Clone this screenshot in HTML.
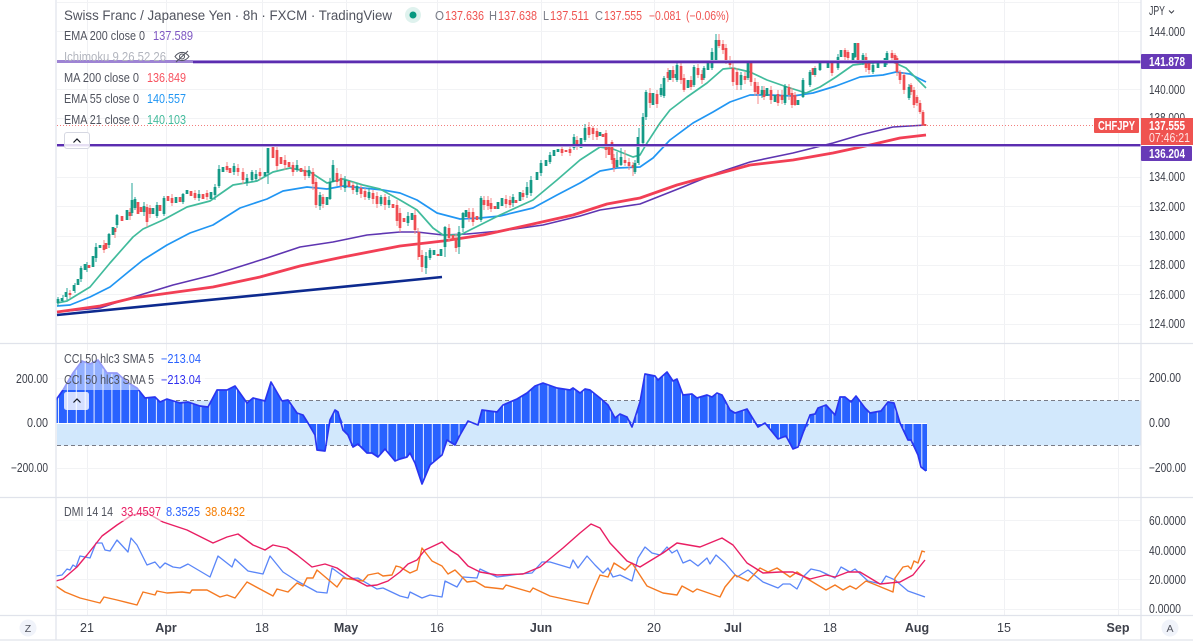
<!DOCTYPE html>
<html><head><meta charset="utf-8"><title>CHFJPY</title>
<style>
html,body{margin:0;padding:0;background:#fff;width:1193px;height:641px;overflow:hidden}
svg{display:block;font-family:"Liberation Sans",sans-serif}
text{font-size:12.5px}
.l{fill:#50535e}
.a{fill:#3d404a}
.t{fill:#3d404a;text-anchor:middle}
.w{font-weight:600}
</style></head><body>
<svg width="1193" height="641" viewBox="0 0 1193 641" xmlns="http://www.w3.org/2000/svg">
<defs>
<pattern id="bars" x="59" y="0" width="8.9" height="10" patternUnits="userSpaceOnUse">
<rect width="8.9" height="10" fill="#2962ff"/><rect x="7.9" width="1" height="10" fill="#e6ecff"/>
</pattern>
</defs>
<!-- grid -->
<path stroke="#f0f1f4" stroke-width="1" fill="none" d="M87.5 0V615M166.5 0V615M262.5 0V615M346.5 0V615M437.5 0V615M541.5 0V615M654.5 0V615M733.5 0V615M829.5 0V615M917.5 0V615M1004.5 0V615M1118.5 0V615"/>
<path stroke="#f2f3f5" stroke-width="1" fill="none" d="M57 2.5H1141M57 31.5H1141M57 89.5H1141M57 118.5H1141M57 177.5H1141M57 206.5H1141M57 236.5H1141M57 265.5H1141M57 294.5H1141M57 324.5H1141M57 378.5H1141M57 468.5H1141M57 520.5H1141M57 550.5H1141M57 579.5H1141M57 609.5H1141"/>
<!-- CCI band -->
<rect x="57" y="400.5" width="1084" height="45" fill="#d2e8fc"/>
<path d="M57 400.5H1141M57 445.5H1141" stroke="#787b86" stroke-width="1" stroke-dasharray="4 3" fill="none"/>
<polygon fill="url(#bars)" stroke="none" points="56,423 56,400 63,390 73,373 82,361 90,364 98,360 107,373 117,373 127,382 137,388 145,398 155,397 160,402 167,399 180,403 188,402 200,406 208,407 217,390 227,390 235,386 247,403 253,398 265,401 271,382 282,401 288,400 297,413 303,415 308,423 315,435 317,450 325,451 330,423 330,420 335,410 338,412 343,423 343,430 348,435 353,447 358,444 367,453 372,453 378,457 385,449 395,461 400,459 407,457 410,453 415,463 422,484 430,465 442,455 447,440 455,445 460,435 468,423 478,425 482,410 497,412 503,405 517,399 527,393 535,386 543,383 557,388 570,390 573,388 580,393 585,389 590,390 600,398 608,405 615,418 620,414 627,417 632,423 632,427 640,402 645,374 655,376 658,380 667,372 673,381 677,379 683,395 692,394 697,398 707,395 712,397 717,393 722,395 730,410 735,413 747,409 756,423 758,427 765,423 778,439 786,436 793,449 798,447 803,433 810,423 810,415 815,414 818,408 826,405 835,415 840,397 845,397 851,402 856,396 865,408 870,413 881,411 888,402 894,403 900,423 908,440 911,440 918,455 921,467 926,471 927,471 927,423"/>
<path d="M56 423.5H927" stroke="#fff" stroke-width="1" fill="none"/>
<polyline fill="none" stroke="#2a35f0" stroke-width="1.7" stroke-linejoin="round" points="56,400 63,390 73,373 82,361 90,364 98,360 107,373 117,373 127,382 137,388 145,398 155,397 160,402 167,399 180,403 188,402 200,406 208,407 217,390 227,390 235,386 247,403 253,398 265,401 271,382 282,401 288,400 297,413 303,415 308,423 315,435 317,450 325,451 330,420 335,410 338,412 343,430 348,435 353,447 358,444 367,453 372,453 378,457 385,449 395,461 400,459 407,457 410,453 415,463 422,484 430,465 442,455 447,440 455,445 460,435 468,421 478,425 482,410 497,412 503,405 517,399 527,393 535,386 543,383 557,388 570,390 573,388 580,393 585,389 590,390 600,398 608,405 615,418 620,414 627,417 632,427 640,402 645,374 655,376 658,380 667,372 673,381 677,379 683,395 692,394 697,398 707,395 712,397 717,393 722,395 730,410 735,413 747,409 758,427 765,423 778,439 786,436 793,449 798,447 803,433 810,415 815,414 818,408 826,405 835,415 840,397 845,397 851,402 856,396 865,408 870,413 881,411 888,402 894,403 900,423 908,440 911,440 918,455 921,467 926,471"/>
<rect x="57" y="350" width="148" height="40" fill="#fff" opacity=".5"/>
<!-- moving averages under candles -->
<polyline fill="none" stroke="#5e35b1" stroke-width="1.6" stroke-linejoin="round" points="57,312 100,308 127,299 173,285 213,275 267,258 300,247 333,242 367,235 400,232 417,232 443,235 467,234 500,231 543,225 580,216 600,210 640,204 683,187 717,173 750,162 793,153 833,143 860,135 893,127 926,125"/>
<polyline fill="none" stroke="#f23f55" stroke-width="2.8" stroke-linejoin="round" points="57,312 100,306 133,298 213,287 260,277 300,266 343,257 400,246 443,241 483,235 533,224 573,215 607,204 640,198 677,185 717,174 750,165 793,160 833,153 870,145 900,138 926,135"/>
<polyline fill="none" stroke="#2196f3" stroke-width="1.7" stroke-linejoin="round" points="57,306 70,305 90,297 110,287 127,273 143,260 167,245 190,233 213,225 240,208 267,199 283,191 307,187 327,189 343,186 363,188 383,190 400,193 417,200 437,213 460,219 480,218 500,216 533,208 557,195 580,183 600,171 617,168 640,167 653,158 670,140 693,123 713,112 730,102 750,95 770,95 793,96 813,93 836,86 860,77 883,75 896,72 910,74 926,82"/>
<polyline fill="none" stroke="#41bb9c" stroke-width="1.7" stroke-linejoin="round" points="57,303 67,301 90,287 110,263 133,237 143,229 163,220 187,207 210,201 233,185 257,181 273,172 290,168 310,172 327,183 343,179 363,185 380,189 400,200 417,210 433,228 443,235 460,235 480,225 500,215 533,200 557,180 580,160 600,147 613,149 633,157 640,155 647,143 660,123 670,110 687,97 707,83 723,69 733,68 750,72 767,80 787,87 806,93 820,87 836,77 853,65 870,63 893,62 906,68 926,88"/>
<path d="M57 315L442 277" stroke="#0d2a8f" stroke-width="2.6" fill="none"/>
<!-- candle wicks -->
<path stroke="#f48a88" stroke-width="1" fill="none" d="M70 290V298M104 240V253M115 228V238M130 208V220M147 204V227M150 205V218M172 194V206M195 190V200M207 190V200M227 162V172M238 164V176M243 168V184M260 168V180M277 147V170M285 155V170M293 162V176M305 166V180M313 168V190M316 178V208M323 194V208M337 168V186M341 174V190M353 182V194M361 185V198M365 188V200M373 190V204M377 192V208M385 194V210M397 200V226M400 208V232M415 210V234M418 228V260M422 250V272M449 224V242M456 234V252M469 208V222M473 208V226M484 196V210M488 196V210M491 198V212M506 195V208M510 196V208M523 190V200M562 146V156M570 146V156M577 136V150M589 122V138M593 126V140M597 128V140M606 130V158M612 140V164M614 154V172M625 150V166M629 158V170M633 162V176M650 88V108M657 90V108M668 68V82M673 66V82M681 62V84M684 74V92M691 76V90M698 64V78M702 70V84M719 34V48M723 40V54M726 44V64M730 56V68M733 62V86M737 68V90M745 72V84M751 60V86M755 78V96M758 82V104M764 86V100M771 86V104M778 90V106M782 90V104M789 84V100M792 88V108M795 92V106M815 66V77M832 60V76M845 48V60M848 50V60M858 43V64M866 53V72M869 60V74M892 50V60M895 53V64M897 56V76M900 70V84M904 72V94M911 83V95M914 87V108M917 95V106M920 100V114M923 110V126"/>
<path stroke="#26a69a" stroke-width="1" fill="none" d="M58 297V306M63 295V302M67 288V300M75 283V293M81 266V282M87 262V272M96 243V262M109 233V248M117 214V228M132 183V216M135 197V210M144 202V216M157 202V218M164 196V216M183 193V204M199 190V201M215 184V200M219 165V188M234 163V175M247 174V186M252 170V182M256 170V181M268 148V184M297 160V172M309 166V178M320 192V210M330 178V200M333 160V182M345 176V192M357 184V195M369 188V200M381 195V206M389 196V208M408 212V226M426 252V274M430 248V260M445 226V257M459 226V254M463 212V232M481 196V222M513 194V207M527 182V198M531 176V196M541 160V176M550 152V164M574 134V150M585 124V142M617 152V168M621 148V166M635 160V174M639 128V165M643 113V145M646 90V120M661 84V97M664 76V98M677 62V82M694 65V87M704 66V80M712 48V70M716 34V62M741 72V90M748 60V80M762 86V98M785 84V105M803 78V98M810 70V87M820 60V71M838 54V70M855 43V58M863 53V65M873 63V74M887 51V65M909 84V100"/>
<!-- candle bodies -->
<path stroke="#ef4d52" stroke-width="2.7" fill="none" d="M70 293V295M89 265V268M104 245V250M106 243V249M115 228V232M122 216V221M130 212V216M138 202V214M141 207V212M147 207V222M150 208V214M160 205V211M168 196V201M172 198V203M180 197V202M191 191V196M195 193V198M203 194V199M207 193V197M227 166V170M230 168V173M238 168V172M243 172V180M260 172V176M273 147V158M277 150V166M281 157V164M285 160V165M289 162V167M293 165V172M301 168V172M305 170V176M313 172V184M316 182V205M323 197V204M337 173V182M341 178V186M349 181V187M353 185V190M361 188V194M365 191V197M373 193V199M377 196V204M385 197V205M393 204V208M397 205V221M400 213V228M404 218V222M415 215V230M419 232V257M422 255V267M438 254V256M449 228V238M453 235V240M456 238V248M469 212V218M473 212V222M477 216V220M484 200V205M488 200V206M491 203V209M495 206V209M506 199V204M510 200V205M516 200V203M523 193V197M562 149V153M566 150V152M570 149V153M577 140V147M589 127V135M593 128V134M597 131V137M603 134V137M606 133V150M609 145V155M612 142V160M614 158V168M625 160V163M629 162V166M633 165V168M650 93V103M657 94V104M668 72V78M673 70V78M681 66V80M684 78V90M691 80V87M698 68V75M702 74V80M719 40V46M723 44V50M726 48V60M730 60V65M733 68V82M737 72V85M745 76V80M751 62V82M755 82V92M758 86V94M764 90V97M771 90V100M778 94V103M782 95V100M789 87V95M792 93V105M795 95V105M813 68V75M832 63V73M845 50V57M848 52V58M858 43V62M866 57V68M869 63V70M892 53V58M895 55V62M897 58V72M900 72V80M904 75V90M911 85V92M914 90V105M917 97V103M920 103V112M923 112V125M925 124V126"/>
<path stroke="#159a87" stroke-width="2.7" fill="none" d="M58 303V299M62 301V298M66 297V292M74 291V285M78 285V279M81 279V268M85 270V264M93 267V256M96 258V247M100 248V245M109 245V234M113 235V227M117 225V215M127 220V210M132 213V200M135 208V199M144 212V206M153 214V208M157 216V205M164 214V198M176 203V197M183 202V194M187 194V190M199 198V194M211 199V192M215 195V187M219 186V169M223 172V167M234 172V166M247 183V178M252 180V172M256 179V174M265 176V172M268 173V148M297 170V165M309 176V170M320 206V195M327 205V197M330 199V182M333 182V165M345 188V180M357 192V186M369 198V192M381 204V197M389 205V200M408 223V216M412 220V213M426 268V256M430 258V250M434 255V250M441 256V249M445 247V227M459 247V232M463 228V213M466 217V210M481 220V198M498 209V202M502 206V198M513 203V197M520 201V192M527 195V187M531 193V180M537 180V172M541 173V163M546 166V160M550 162V155M554 156V150M558 152V149M574 148V137M581 148V138M585 140V128M600 136V132M617 167V160M621 165V157M635 172V163M638 163V137M643 143V117M646 117V92M653 105V93M661 95V88M664 96V78M670 80V70M676 78V74M677 80V65M688 88V80M694 85V67M704 78V68M708 70V60M712 68V52M716 60V40M741 85V75M748 78V63M762 95V90M767 96V88M775 102V95M785 103V86M798 105V100M803 97V80M810 85V72M815 75V68M820 70V62M828 68V60M838 68V57M841 57V50M853 60V53M855 57V43M863 63V55M873 72V65M878 68V63M885 67V58M887 63V53M909 98V87"/>
<!-- horizontal rays and price line -->
<path d="M57 125.5H1094" stroke="#ef5350" stroke-width="1" stroke-dasharray="1 2" fill="none" opacity=".75"/>
<rect x="57" y="60" width="136" height="3" fill="#9e84d4"/>
<rect x="193" y="61" width="948" height="2.3" fill="#5b2db0"/>
<rect x="193" y="60" width="948" height="1" fill="#a68dd8"/>
<rect x="57" y="144" width="1084" height="2.2" fill="#5b2db0"/>
<rect x="57" y="146" width="1084" height="1" fill="#b7a4e0"/>
<!-- DMI -->
<polyline fill="none" stroke="#5a86f8" stroke-width="1.3" stroke-linejoin="round" points="56,576 62,575 67,569 70,570 73,565 76,567 80,556 90,558 96,543 102,543 105,550 110,551 117,540 128,552 131,538 137,545 147,565 155,562 160,568 165,563 173,567 180,568 188,564 210,577 218,556 232,567 235,559 248,571 263,574 270,556 283,572 297,581 317,592 327,593 332,568 347,579 358,578 377,589 383,588 400,596 408,598 410,592 422,598 430,595 442,597 445,581 457,587 463,577 477,578 480,569 497,577 520,574 532,573 542,562 550,562 570,568 573,560 578,568 587,556 595,565 603,573 608,568 613,577 620,575 632,581 638,558 645,547 652,553 660,555 667,547 672,553 677,550 683,563 690,560 698,566 707,558 710,564 716,555 725,563 737,577 748,570 763,582 778,588 783,584 790,584 797,589 803,577 811,569 820,571 835,578 841,567 850,572 855,569 868,581 881,584 886,576 895,580 908,591 925,597"/>
<polyline fill="none" stroke="#f57a22" stroke-width="1.4" stroke-linejoin="round" points="56,586 65,592 80,598 100,603 104,597 117,600 137,605 143,592 155,595 157,591 167,593 182,592 190,593 192,590 207,590 220,597 227,595 235,598 247,582 273,596 277,589 288,592 297,583 303,586 307,578 313,578 317,570 337,587 343,578 363,581 368,575 378,573 383,576 392,575 396,566 400,567 410,573 417,570 422,548 432,561 442,566 448,574 455,570 467,582 475,581 485,587 503,589 506,585 530,592 533,588 550,596 573,601 588,604 593,591 600,575 608,577 614,563 625,570 632,563 647,586 663,593 677,595 682,586 693,592 697,589 720,597 725,587 735,575 748,581 760,568 768,572 777,568 790,577 797,572 806,578 826,590 835,585 843,590 850,586 856,589 866,581 876,585 893,592 895,578 903,567 908,566 911,569 914,561 918,563 922,551 925,552"/>
<polyline fill="none" stroke="#e91e63" stroke-width="1.4" stroke-linejoin="round" points="56,581 63,579 77,567 87,555 102,536 117,525 132,515 147,513 163,522 187,530 213,543 227,537 238,534 253,545 265,550 273,545 287,548 297,555 312,567 325,564 337,568 350,577 367,586 377,585 388,581 400,572 408,564 417,560 425,550 442,542 450,550 458,555 468,566 480,572 497,575 523,574 540,567 563,548 580,533 591,524 600,528 610,543 627,561 640,567 663,553 677,543 700,547 722,538 733,545 747,563 763,573 780,572 793,572 810,579 826,575 835,577 848,572 860,572 880,584 900,582 913,575 925,560"/>
<rect x="57" y="505" width="190" height="16" fill="#fff" opacity=".55"/>
<!-- pane separators and axis -->
<path stroke="#e0e3eb" stroke-width="1.2" fill="none" d="M56 0V640M1141 0V640M0 343.5H1193M0 497.5H1193M0 615.5H1193M0 640H1193"/>
<!-- legend top -->
<text x="64" y="20" fill="#50535e" style="font-size:13.5px" textLength="328" lengthAdjust="spacingAndGlyphs">Swiss Franc / Japanese Yen · 8h · FXCM · TradingView</text>
<circle cx="413" cy="15" r="8" fill="#dff2ee"/><circle cx="413" cy="15" r="3.5" fill="#089981"/>
<text x="435" y="20" fill="#787b86" textLength="9" lengthAdjust="spacingAndGlyphs">O</text><text x="445" y="20" fill="#ef5350" textLength="39" lengthAdjust="spacingAndGlyphs">137.636</text>
<text x="489" y="20" fill="#787b86" textLength="8" lengthAdjust="spacingAndGlyphs">H</text><text x="498" y="20" fill="#ef5350" textLength="39" lengthAdjust="spacingAndGlyphs">137.638</text>
<text x="543" y="20" fill="#787b86" textLength="6" lengthAdjust="spacingAndGlyphs">L</text><text x="550" y="20" fill="#ef5350" textLength="39" lengthAdjust="spacingAndGlyphs">137.511</text>
<text x="595" y="20" fill="#787b86" textLength="8" lengthAdjust="spacingAndGlyphs">C</text><text x="604" y="20" fill="#ef5350" textLength="38" lengthAdjust="spacingAndGlyphs">137.555</text>
<text x="649" y="20" fill="#ef5350" textLength="32" lengthAdjust="spacingAndGlyphs">−0.081</text>
<text x="686" y="20" fill="#ef5350" textLength="43" lengthAdjust="spacingAndGlyphs">(−0.06%)</text>
<text x="64" y="40" class="l" textLength="81" lengthAdjust="spacingAndGlyphs">EMA 200 close 0</text><text x="153" y="40" fill="#7e57c2" textLength="40" lengthAdjust="spacingAndGlyphs">137.589</text>
<text x="64" y="61" fill="#b2b5be" textLength="102" lengthAdjust="spacingAndGlyphs">Ichimoku 9 26 52 26</text>
<g fill="none" stroke="#50535e" stroke-width="1"><path d="M175 56.5c4-5.5 10-5.5 14 0c-4 5.5-10 5.5-14 0z"/><circle cx="182" cy="56.5" r="2.5"/><path d="M176 62L188 51"/></g>
<text x="64" y="82" class="l" textLength="75" lengthAdjust="spacingAndGlyphs">MA 200 close 0</text><text x="147" y="82" fill="#f7525f" textLength="39" lengthAdjust="spacingAndGlyphs">136.849</text>
<text x="64" y="103" class="l" textLength="75" lengthAdjust="spacingAndGlyphs">EMA 55 close 0</text><text x="147" y="103" fill="#2196f3" textLength="39" lengthAdjust="spacingAndGlyphs">140.557</text>
<text x="64" y="124" class="l" textLength="75" lengthAdjust="spacingAndGlyphs">EMA 21 close 0</text><text x="147" y="124" fill="#43bb9c" textLength="39" lengthAdjust="spacingAndGlyphs">140.103</text>
<rect x="64.5" y="132.5" width="25" height="16" rx="2.5" fill="#fff" fill-opacity=".85" stroke="#d6d8e2"/>
<path d="M73.5 142.5L77 139L80.5 142.5" fill="none" stroke="#131722" stroke-width="1.2"/>
<!-- CCI legend -->
<text x="64" y="363" class="l" textLength="90" lengthAdjust="spacingAndGlyphs">CCI 50 hlc3 SMA 5</text><text x="161" y="363" fill="#2962ff" textLength="40" lengthAdjust="spacingAndGlyphs">−213.04</text>
<text x="64" y="384" class="l" textLength="90" lengthAdjust="spacingAndGlyphs">CCI 50 hlc3 SMA 5</text><text x="161" y="384" fill="#3030f0" textLength="40" lengthAdjust="spacingAndGlyphs">−213.04</text>
<rect x="64" y="392" width="25" height="18" rx="2.5" fill="#fff" fill-opacity=".8"/>
<path d="M73.5 402.5L77 399L80.5 402.5" fill="none" stroke="#131722" stroke-width="1.2"/>
<!-- DMI legend -->
<text x="64" y="516" class="l" textLength="49" lengthAdjust="spacingAndGlyphs">DMI 14 14</text>
<text x="121" y="516" fill="#e91e63" textLength="40" lengthAdjust="spacingAndGlyphs">33.4597</text>
<text x="166" y="516" fill="#2962ff" textLength="34" lengthAdjust="spacingAndGlyphs">8.3525</text>
<text x="205" y="516" fill="#f57c00" textLength="40" lengthAdjust="spacingAndGlyphs">38.8432</text>
<!-- left axis labels -->
<text x="16" y="383" class="a" textLength="32" lengthAdjust="spacingAndGlyphs">200.00</text>
<text x="27" y="427" class="a" textLength="21" lengthAdjust="spacingAndGlyphs">0.00</text>
<text x="11" y="472" class="a" textLength="37" lengthAdjust="spacingAndGlyphs">−200.00</text>
<!-- right axis labels -->
<text x="1149" y="15" class="a" textLength="16" lengthAdjust="spacingAndGlyphs">JPY</text>
<path d="M1169 10.5L1171.5 13L1174 10.5" fill="none" stroke="#3d404a"/>
<g class="a">
<text x="1149" y="36" textLength="36" lengthAdjust="spacingAndGlyphs">144.000</text>
<text x="1149" y="94" textLength="36" lengthAdjust="spacingAndGlyphs">140.000</text>
<text x="1149" y="122" textLength="36" lengthAdjust="spacingAndGlyphs">138.000</text>
<text x="1149" y="181" textLength="36" lengthAdjust="spacingAndGlyphs">134.000</text>
<text x="1149" y="211" textLength="36" lengthAdjust="spacingAndGlyphs">132.000</text>
<text x="1149" y="240" textLength="36" lengthAdjust="spacingAndGlyphs">130.000</text>
<text x="1149" y="269" textLength="36" lengthAdjust="spacingAndGlyphs">128.000</text>
<text x="1149" y="299" textLength="36" lengthAdjust="spacingAndGlyphs">126.000</text>
<text x="1149" y="328" textLength="36" lengthAdjust="spacingAndGlyphs">124.000</text>
<text x="1149" y="382" textLength="32" lengthAdjust="spacingAndGlyphs">200.00</text>
<text x="1149" y="427" textLength="21" lengthAdjust="spacingAndGlyphs">0.00</text>
<text x="1149" y="472" textLength="37" lengthAdjust="spacingAndGlyphs">−200.00</text>
<text x="1149" y="525" textLength="37" lengthAdjust="spacingAndGlyphs">60.0000</text>
<text x="1149" y="555" textLength="37" lengthAdjust="spacingAndGlyphs">40.0000</text>
<text x="1149" y="584" textLength="37" lengthAdjust="spacingAndGlyphs">20.0000</text>
<text x="1149" y="613" textLength="32" lengthAdjust="spacingAndGlyphs">0.0000</text>
</g>
<!-- price tags -->
<rect x="1141" y="54" width="51" height="15" rx="1" fill="#673ab7"/>
<text x="1149" y="66" fill="#fff" class="w" textLength="36" lengthAdjust="spacingAndGlyphs">141.878</text>
<rect x="1141" y="146" width="51" height="15" rx="1" fill="#673ab7"/>
<text x="1149" y="158" fill="#fff" class="w" textLength="36" lengthAdjust="spacingAndGlyphs">136.204</text>
<rect x="1094" y="118" width="45" height="15" rx="1" fill="#ef5350"/>
<text x="1098" y="130" fill="#fff" class="w" textLength="37" lengthAdjust="spacingAndGlyphs">CHFJPY</text>
<rect x="1141" y="118" width="52" height="27" fill="#ef5350"/>
<text x="1149" y="130" fill="#fff" class="w" textLength="36" lengthAdjust="spacingAndGlyphs">137.555</text>
<text x="1149" y="142" fill="#ffe3e2" textLength="41" lengthAdjust="spacingAndGlyphs">07:46:21</text>
<!-- time axis -->
<g class="t">
<text x="87" y="632">21</text>
<text x="166" y="632" class="w">Apr</text>
<text x="262" y="632">18</text>
<text x="346" y="632" class="w">May</text>
<text x="437" y="632">16</text>
<text x="541" y="632" class="w">Jun</text>
<text x="654" y="632">20</text>
<text x="733" y="632" class="w">Jul</text>
<text x="830" y="632">18</text>
<text x="917" y="632" class="w">Aug</text>
<text x="1004" y="632">15</text>
<text x="1118" y="632" class="w">Sep</text>
</g>
<circle cx="28" cy="628" r="8.5" fill="#f0f3fa"/>
<text x="28" y="632" fill="#50535e" text-anchor="middle" style="font-size:10.5px">Z</text>
<circle cx="1170" cy="628" r="8.5" fill="#f0f3fa"/>
<text x="1170" y="632" fill="#50535e" text-anchor="middle" style="font-size:10.5px">A</text>
</svg>
</body></html>
